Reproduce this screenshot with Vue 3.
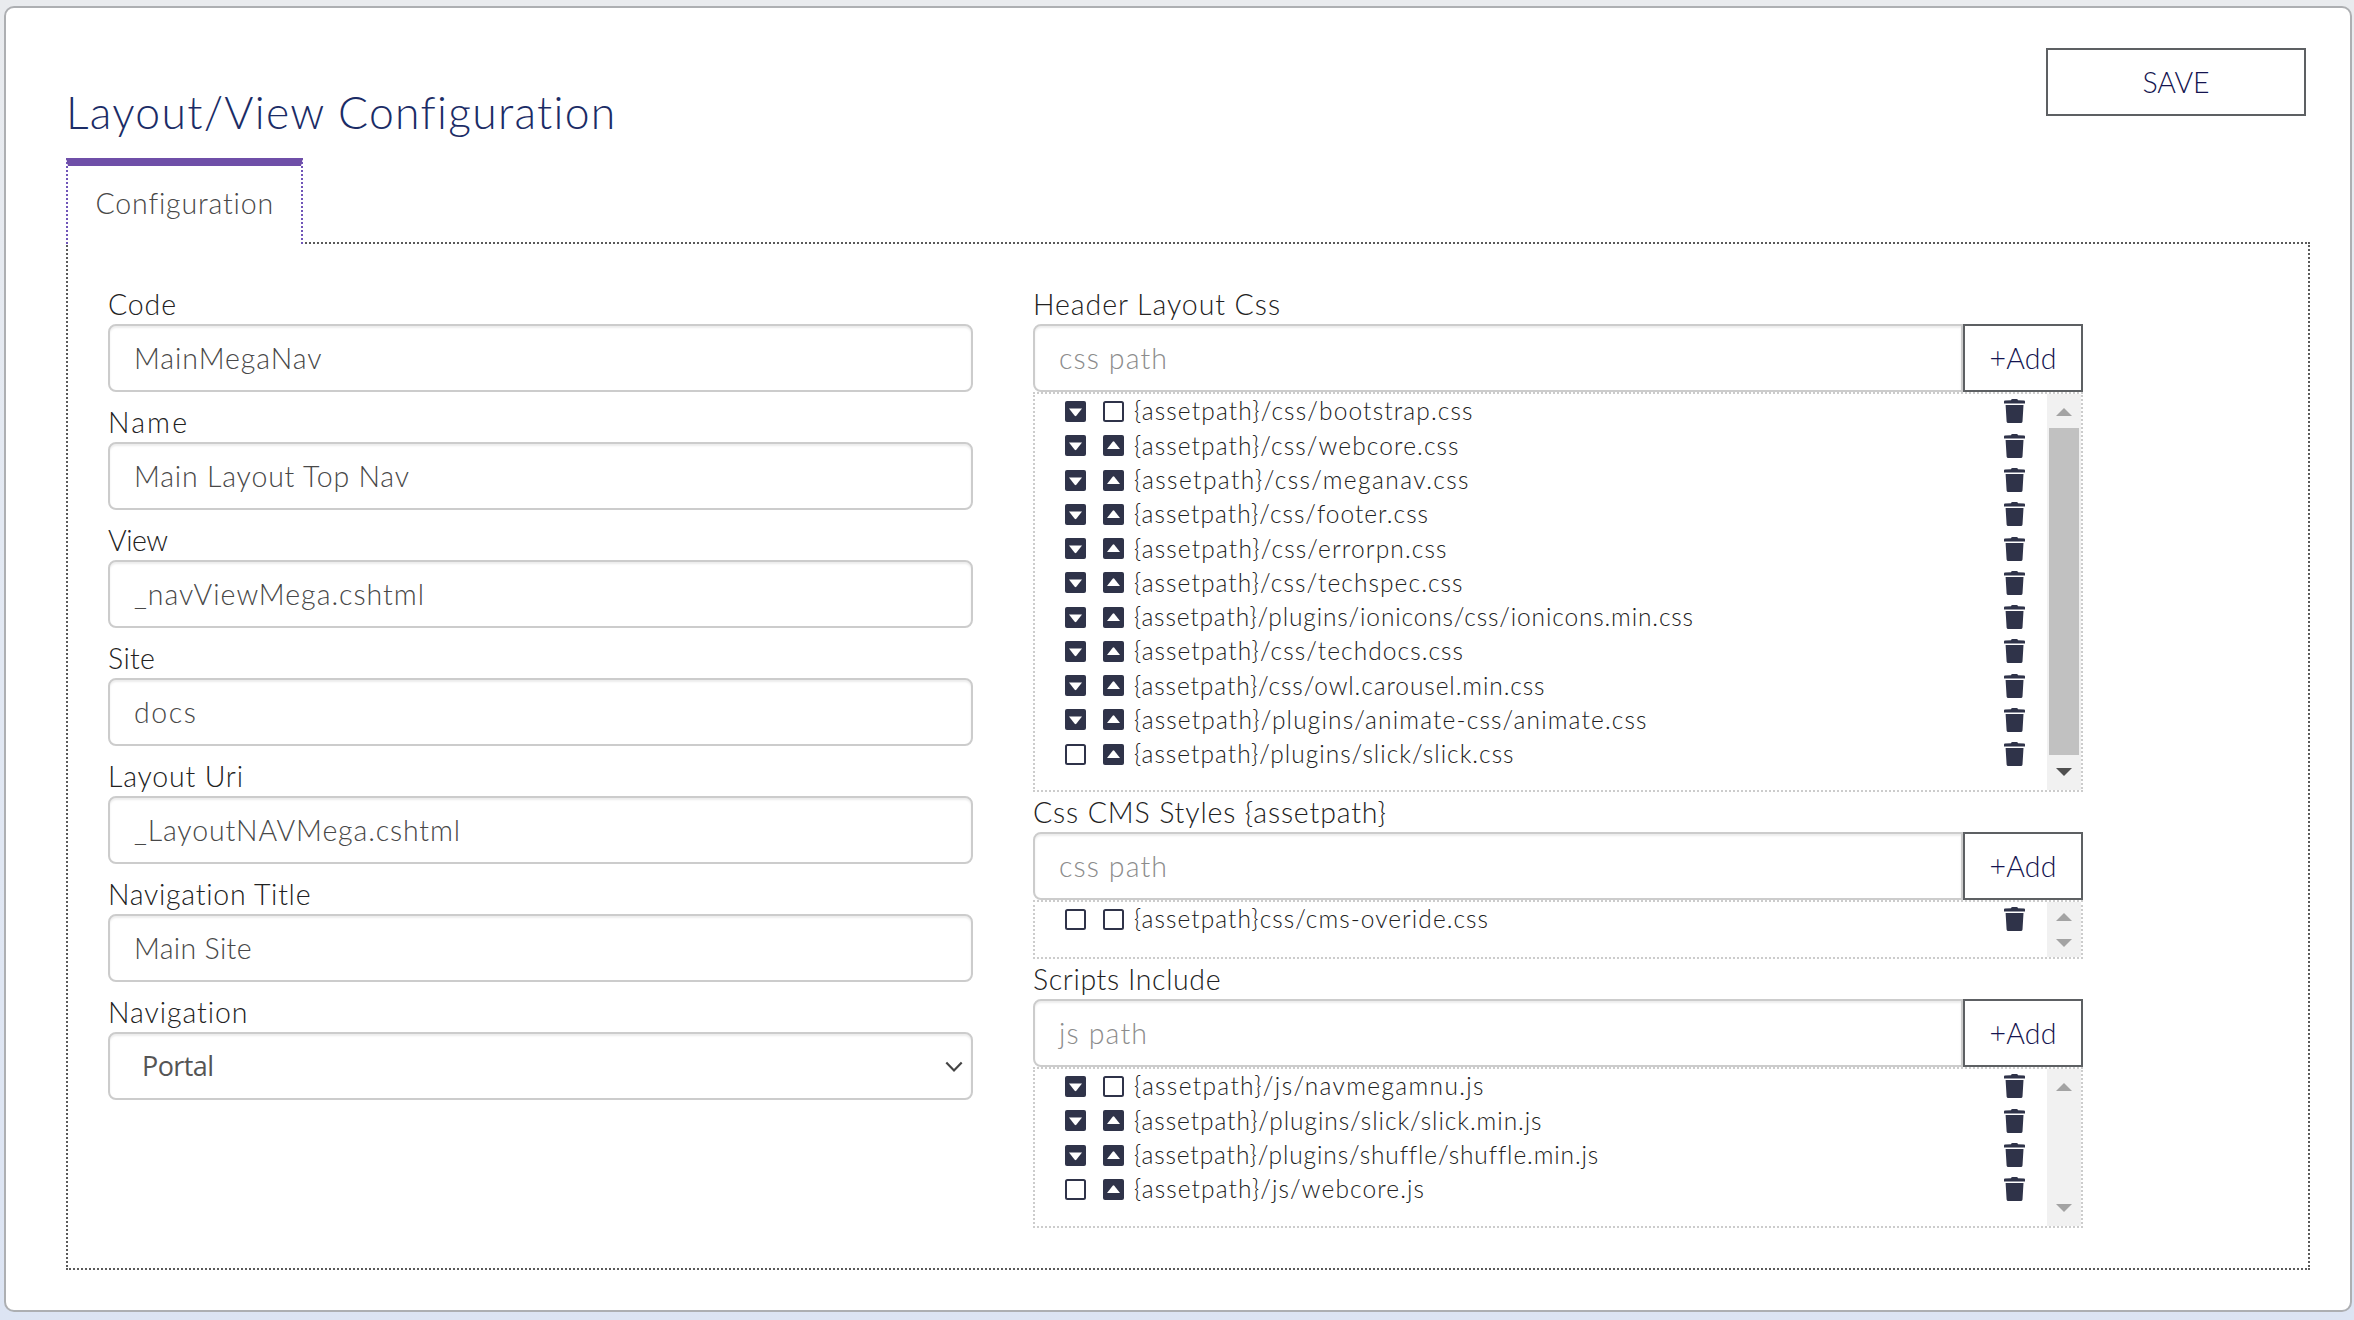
<script setup>
const fields = [
  { label: 'Code', lw: 68, value: 'MainMegaNav', vw: 187.5 },
  { label: 'Name', lw: 79, value: 'Main Layout Top Nav', vw: 275 },
  { label: 'View', lw: 60, value: '_navViewMega.cshtml', vw: 290 },
  { label: 'Site', lw: 47, value: 'docs', vw: 62 },
  { label: 'Layout Uri', lw: 135, value: '_LayoutNAVMega.cshtml', vw: 326 },
  { label: 'Navigation Title', lw: 203, value: 'Main Site', vw: 117.5 },
]

const groups = [
  {
    label: 'Header Layout Css', lw: 247, hint: 'css path', hw: 108, size: 'tall',
    rows: [
      ['{assetpath}/css/bootstrap.css', 338.5],
      ['{assetpath}/css/webcore.css', 324.5],
      ['{assetpath}/css/meganav.css', 334.5],
      ['{assetpath}/css/footer.css', 294],
      ['{assetpath}/css/errorpn.css', 312.5],
      ['{assetpath}/css/techspec.css', 328.5],
      ['{assetpath}/plugins/ionicons/css/ionicons.min.css', 559],
      ['{assetpath}/css/techdocs.css', 329],
      ['{assetpath}/css/owl.carousel.min.css', 410.5],
      ['{assetpath}/plugins/animate-css/animate.css', 512.5],
      ['{assetpath}/plugins/slick/slick.css', 379.5],
    ],
  },
  {
    label: 'Css CMS Styles {assetpath}', lw: 353, hint: 'css path', hw: 108, size: 'short',
    rows: [['{assetpath}css/cms-overide.css', 354]],
  },
  {
    label: 'Scripts Include', lw: 187.5, hint: 'js path', hw: 88, size: 'medium',
    rows: [
      ['{assetpath}/js/navmegamnu.js', 349.5],
      ['{assetpath}/plugins/slick/slick.min.js', 407.5],
      ['{assetpath}/plugins/shuffle/shuffle.min.js', 462.5],
      ['{assetpath}/js/webcore.js', 290],
    ],
  },
]

// Tracks a label out or in so that it takes up the given width.
const vFit = {
  mounted(el, { value }) {
    const natural = el.getBoundingClientRect().width
    el.style.letterSpacing = `${(value - natural) / (el.textContent.length - 1)}px`
  },
}
</script>

<template>
  <div class="page">
    <main class="card">
      <header class="head">
        <h1><span v-fit="549">Layout/View Configuration</span></h1>
        <button class="btn save"><span v-fit="67">SAVE</span></button>
      </header>

      <nav class="tab"><span v-fit="177.5">Configuration</span></nav>

      <section class="panel">
        <div class="left">
          <div v-for="f in fields" :key="f.label" class="field">
            <label><span v-fit="f.lw">{{ f.label }}</span></label>
            <div class="input"><span v-fit="f.vw">{{ f.value }}</span></div>
          </div>
          <div class="field">
            <label><span v-fit="140">Navigation</span></label>
            <div class="input select">
              <span v-fit="72">Portal</span>
              <svg class="chevron" viewBox="0 0 18 12"><path d="M1.3 1.6 9 9.400l7.700-7.800" /></svg>
            </div>
          </div>
        </div>

        <div class="right">
          <div v-for="g in groups" :key="g.label" class="group">
            <label><span v-fit="g.lw">{{ g.label }}</span></label>
            <div class="adder">
              <div class="input hint"><span v-fit="g.hw">{{ g.hint }}</span></div>
              <button class="btn add"><span v-fit="67">+Add</span></button>
            </div>
            <div class="list" :class="g.size">
              <ul>
                <li v-for="(r, i) in g.rows" :key="r[0]">
                  <svg class="box" viewBox="0 0 21 21">
                    <template v-if="i < g.rows.length - 1">
                      <rect class="fill" width="21" height="21" rx="2" />
                      <path class="mark" d="M4 7.500h13l-5.700 7.200q-.8.900-1.600 0z" />
                    </template>
                    <rect v-else class="empty" x="1" y="1" width="19" height="19" rx="1.500" />
                  </svg>
                  <svg class="box" viewBox="0 0 21 21">
                    <template v-if="i > 0">
                      <rect class="fill" width="21" height="21" rx="2" />
                      <path class="mark" d="M4 14h13l-5.700-7.200q-.8-.9-1.600 0z" />
                    </template>
                    <rect v-else class="empty" x="1" y="1" width="19" height="19" rx="1.500" />
                  </svg>
                  <span class="path"><span v-fit="r[1]">{{ r[0] }}</span></span>
                  <svg class="trash" viewBox="0 0 21 24">
                    <path d="M7 1.200Q7.200 0 8.500 0h4q1.300 0 1.500 1.200l6 .3q1 .1 1 1v2H0v-2q0-.9 1-1zM1.600 6h17.900l-1 16.400q-.1 1.600-1.700 1.600H4.300q-1.600 0-1.700-1.600z" />
                  </svg>
                </li>
              </ul>
              <div class="bar">
                <svg viewBox="0 0 16 8"><path d="M0 8 8 0l8 8z" /></svg>
                <i v-if="g.size === 'tall'" class="thumb"></i>
                <svg :class="{ dark: g.size === 'tall' }" viewBox="0 0 16 8"><path d="M0 0h16L8 8z" /></svg>
              </div>
            </div>
          </div>
        </div>
      </section>
    </main>
  </div>
</template>

<style>
body {
  margin: 0;
}
</style>

<style scoped>
* {
  box-sizing: border-box;
}
.page {
  width: 2354px;
  height: 1320px;
  padding: 6px 2px 8px 4px;
  overflow: hidden;
  background: linear-gradient(#e9ebee, #e3e9f3 40%, #dce4f3);
  font-family: Lato, "Open Sans", sans-serif;
  font-weight: 300;
  font-size: 28.500px;
  color: #222;
  white-space: nowrap;
}
.card {
  height: 1306px;
  padding: 0 40px 0 60px;
  border: 2px solid #adafb2;
  border-radius: 10px;
  background: #fff;
}
.head {
  display: flex;
  justify-content: space-between;
  align-items: flex-start;
  height: 150px;
}
h1 {
  margin: 74px 0 0;
  font-size: 44.500px;
  font-weight: 300;
  line-height: 60px;
  color: #1b2c66;
}
.btn {
  padding: 0;
  border: 2px solid #5d6063;
  background: #fff;
  font: inherit;
  line-height: 64px;
  color: #14144f;
}
.save {
  width: 260px;
  height: 68px;
  margin: 40px 4px 0 0;
}
.tab {
  position: relative;
  z-index: 1;
  width: 237px;
  height: 86px;
  margin-bottom: -2px;
  padding-left: 27.500px;
  border: 2px dotted #7055b8;
  border-top: 8px solid #6f4fa8;
  border-bottom: 0;
  background: #fff;
  line-height: 75px;
  color: #484848;
}
.panel {
  display: flex;
  gap: 60.500px;
  height: 1028px;
  padding: 40px;
  border: 2px dotted #5a5a5a;
}
.left {
  width: 864.500px;
  margin-top: -10px;
}
.right {
  width: 1050px;
}
label {
  display: block;
  height: 40px;
  line-height: 40px;
}
.field label {
  height: 50px;
  padding-top: 10px;
}
.input {
  height: 68px;
  padding-left: 24px;
  border: 2px solid #ccc;
  border-radius: 8px;
  box-shadow: inset 0 2px 2px rgba(0, 0, 0, 0.075);
  line-height: 65px;
  color: #484848;
}
.select {
  display: flex;
  justify-content: space-between;
  padding: 0 8px 0 32px;
  font-family: "Open Sans", sans-serif;
  font-size: 27px;
  font-weight: 400;
  line-height: 64px;
  color: #555;
}
.chevron {
  width: 18px;
  height: 12px;
  margin-top: 27px;
  fill: none;
  stroke: #444;
  stroke-width: 2.200;
}
.adder {
  display: flex;
}
.hint {
  flex: 1;
  border-radius: 8px 0 0 8px;
  color: #8c8c8c;
}
.add {
  width: 120px;
  height: 68px;
}
.list {
  display: flex;
  justify-content: space-between;
  border: 2px dotted #ccc;
}
.tall {
  height: 400px;
}
.short {
  height: 59px;
}
.medium {
  height: 161px;
}
ul {
  flex: 1;
  margin: 0;
  padding: 0.300px 22px 0 30px;
  list-style: none;
  font-size: 24.500px;
}
li {
  display: flex;
  align-items: center;
  height: 34.286px;
}
.box {
  width: 21px;
  height: 21px;
  margin-right: 16.500px;
}
.fill {
  fill: #2f3349;
}
.mark {
  fill: #fff;
}
.empty {
  fill: #fff;
  stroke: #2f3349;
  stroke-width: 2;
}
.path {
  flex: 1;
  margin-left: -6px;
  line-height: 34px;
}
.trash {
  width: 21px;
  height: 24px;
  fill: #2f3349;
}
.bar {
  display: flex;
  flex-direction: column;
  align-items: center;
  justify-content: space-between;
  width: 34px;
  padding: 14px 0;
  background: #f1f1f1;
}
.short .bar {
  padding: 11px 0 10px;
}
.bar svg {
  width: 16px;
  height: 8px;
  fill: #a3a3a3;
}
.bar .dark {
  fill: #505050;
}
.thumb {
  width: 30px;
  height: 327px;
  margin-bottom: 1px;
  background: #c1c1c1;
}
</style>
